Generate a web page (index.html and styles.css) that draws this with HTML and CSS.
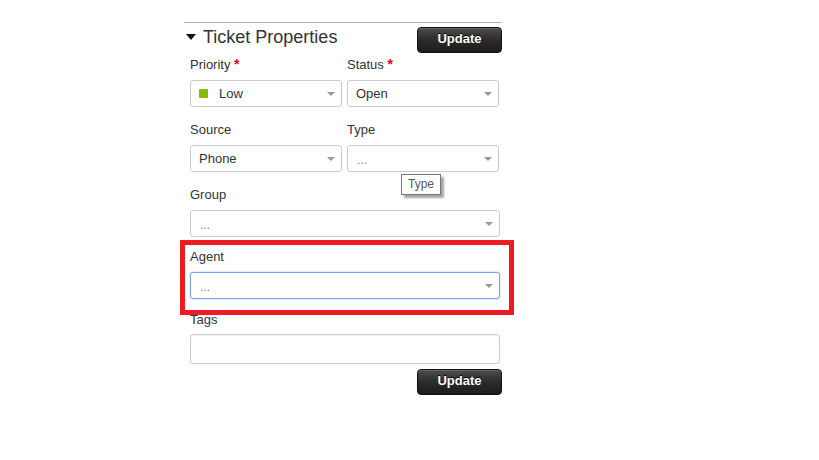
FILE: index.html
```html
<!DOCTYPE html>
<html>
<head>
<meta charset="utf-8">
<link rel="stylesheet" href="styles.css">
</head>
<body>
<div class="panel">
  <div class="header">
    <div class="title"><span class="caret"></span>Ticket Properties</div>
    <button class="btn">Update</button>
  </div>
  <div class="fields">
    <div class="row two first">
      <div class="field">
        <div class="label">Priority <span class="req">*</span></div>
        <div class="select"><span class="dot"></span><span class="val">Low</span><span class="arrow"></span></div>
      </div>
      <div class="field">
        <div class="label">Status <span class="req">*</span></div>
        <div class="select"><span class="val">Open</span><span class="arrow"></span></div>
      </div>
    </div>
    <div class="row two">
      <div class="field">
        <div class="label">Source</div>
        <div class="select"><span class="val">Phone</span><span class="arrow"></span></div>
      </div>
      <div class="field tipped">
        <div class="label">Type</div>
        <div class="select"><span class="val empty">...</span><span class="arrow"></span></div>
        <div class="tooltip">Type</div>
      </div>
    </div>
    <div class="row">
      <div class="field">
        <div class="label">Group</div>
        <div class="select"><span class="val empty">...</span><span class="arrow"></span></div>
      </div>
    </div>
    <div class="row agent-row">
      <div class="field highlight">
        <div class="label">Agent</div>
        <div class="select focus"><span class="val empty">...</span><span class="arrow"></span></div>
      </div>
    </div>
    <div class="row tags-row">
      <div class="field">
        <div class="label">Tags</div>
        <div class="input"></div>
      </div>
    </div>
  </div>
  <div class="footer">
    <button class="btn">Update</button>
  </div>
</div>
</body>
</html>
```

FILE: styles.css
```css
* { box-sizing: border-box; }
html, body { margin: 0; padding: 0; background: #fff; }
body {
  font-family: "Liberation Sans", Arial, sans-serif;
  color: #333;
  font-size: 13px;
}
.panel {
  margin-left: 184px;
  margin-top: 22px;
  width: 318px;
  border-top: 1px solid #b0b0b0;
}
.header {
  display: flex;
  justify-content: space-between;
  align-items: flex-start;
  height: 30px;
}
.title {
  display: flex;
  align-items: center;
  margin-top: 3px;
  height: 22px;
  font-size: 18px;
  line-height: 22px;
  color: #333;
}
.caret {
  width: 0; height: 0;
  border-left: 5.5px solid transparent;
  border-right: 5.5px solid transparent;
  border-top: 6px solid #111;
  margin-left: 2px;
  margin-right: 7px;
  margin-top: -1px;
}
.btn {
  margin-top: 4px;
  width: 85px;
  height: 26px;
  border: 1px solid #111;
  border-radius: 4px;
  background: linear-gradient(#4d4d4d, #2b2b2b 50%, #1c1c1c);
  box-shadow: inset 0 1px 0 rgba(255,255,255,.15);
  color: #fff;
  font-family: "Liberation Sans", Arial, sans-serif;
  font-weight: bold;
  font-size: 13px;
  line-height: 22px;
  text-shadow: 0 -1px 0 #000;
  padding: 0 0 2px 0;
  cursor: pointer;
}
.fields { padding: 0 2px 0 6px; }
.row { margin-top: 13px; }
.row.first { margin-top: 2px; }
.row.two {
  display: grid;
  grid-template-columns: 152px 152px;
  column-gap: 5px;
}
.agent-row { margin-top: 10px; }
.tags-row { margin-top: 11px; }
.field { position: relative; }
.label {
  height: 18px;
  line-height: 18px;
  margin-bottom: 7px;
  color: #333;
}
.row:not(.first) .label { padding-top: 1px; }
.tags-row .label { padding-top: 0; margin-bottom: 6px; }
.req { color: #e2001a; font-weight: bold; font-size: 14px; }
.select {
  position: relative;
  display: flex;
  align-items: center;
  height: 27px;
  border: 1px solid #ccc;
  border-radius: 3px;
  background: #fff;
  padding-left: 8px;
}
.val { color: #333; }
.val.empty { color: #888; font-size: 12px; padding-left: 1px; margin-top: 3px; }
.dot {
  width: 9px; height: 9px;
  background: #82bf00;
  border-radius: 1px;
  margin-right: 11px;
}
.arrow {
  position: absolute;
  right: 6px;
  top: 11px;
  width: 0; height: 0;
  border-left: 4px solid transparent;
  border-right: 4px solid transparent;
  border-top: 4px solid #999;
}
.select.focus {
  border-color: #74a5ec;
  box-shadow: 0 0 2px rgba(102,160,235,.6);
}
.input {
  height: 30px;
  border: 1px solid #ccc;
  border-radius: 3px;
  box-shadow: inset 0 1px 2px rgba(0,0,0,.06);
}
.tooltip {
  position: absolute;
  left: 54px;
  top: 54px;
  width: 40px;
  height: 21px;
  border: 1px solid #767676;
  background: #fff;
  color: #575757;
  font-size: 12px;
  line-height: 19px;
  text-align: center;
  box-shadow: 3px 3px 2px rgba(0,0,0,.35);
  z-index: 3;
}
.highlight::after {
  content: "";
  position: absolute;
  left: -10px;
  right: -14px;
  top: -7px;
  bottom: -16px;
  border: 5px solid #ed1c24;
  pointer-events: none;
  z-index: 2;
}
.footer {
  display: flex;
  justify-content: flex-end;
  margin-top: 1px;
}
```
